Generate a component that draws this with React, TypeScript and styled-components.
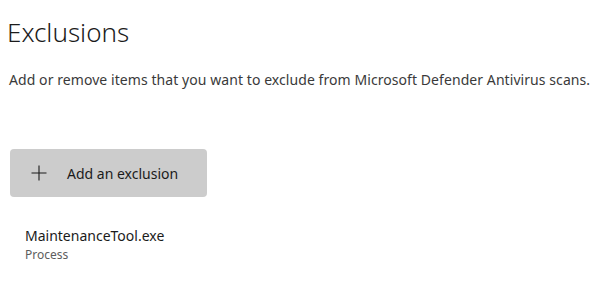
import React from 'react'
import styled, { createGlobalStyle } from 'styled-components';

const GlobalStyle = createGlobalStyle`
  html, body {
    margin: 0;
    padding: 0;
    background: #ffffff;
  }
  body {
    font-family: "Noto Sans", "Open Sans", "Liberation Sans", sans-serif;
    color: #1b1b1b;
  }
`;

const PlusIcon = () => (
    <svg width="16" height="16" viewBox="0 0 16 16" fill="none">
        <path d="M8 0.5V15.5M0.5 8H15.5" stroke="#1b1b1b" strokeWidth="1.1" />
    </svg>
);

export default function App() {
    return (
        <>
            <GlobalStyle />
            <Page>
                <Title>Exclusions</Title>
                <Description>
                    Add or remove items that you want to exclude from Microsoft Defender Antivirus scans.
                </Description>
                <AddButton>
                    <PlusIcon />
                    <span>Add an exclusion</span>
                </AddButton>
                <ExclusionItem>
                    <ItemName>MaintenanceTool.exe</ItemName>
                    <ItemType>Process</ItemType>
                </ExclusionItem>
            </Page>
        </>
    )
}

const Page = styled.main`
    display: flex;
    flex-direction: column;
    align-items: flex-start;
    padding: 14px 0 0 7px;
`;

const Title = styled.h1`
    margin: 0;
    font-size: 26px;
    font-weight: 300;
    line-height: 36px;
    color: #1b1b1b;
`;

const Description = styled.p`
    margin: 20px 0 0 2px;
    font-size: 14px;
    line-height: 20px;
    letter-spacing: 0.07px;
    color: #3a3a3a;
`;

const AddButton = styled.button`
    display: flex;
    align-items: center;
    gap: 20px;
    margin: 59px 0 0 3px;
    width: 197px;
    height: 48px;
    padding: 0 0 0 21px;
    border: none;
    border-radius: 4px;
    background: #cccccc;
    font-family: inherit;
    font-size: 14px;
    color: #1b1b1b;
    cursor: pointer;
`;

const ExclusionItem = styled.div`
    display: flex;
    flex-direction: column;
    margin: 29px 0 0 18px;
`;

const ItemName = styled.span`
    font-size: 14px;
    line-height: 20px;
    color: #1b1b1b;
`;

const ItemType = styled.span`
    margin-top: 1px;
    font-size: 12px;
    line-height: 16px;
    color: #5d5d5d;
`;
